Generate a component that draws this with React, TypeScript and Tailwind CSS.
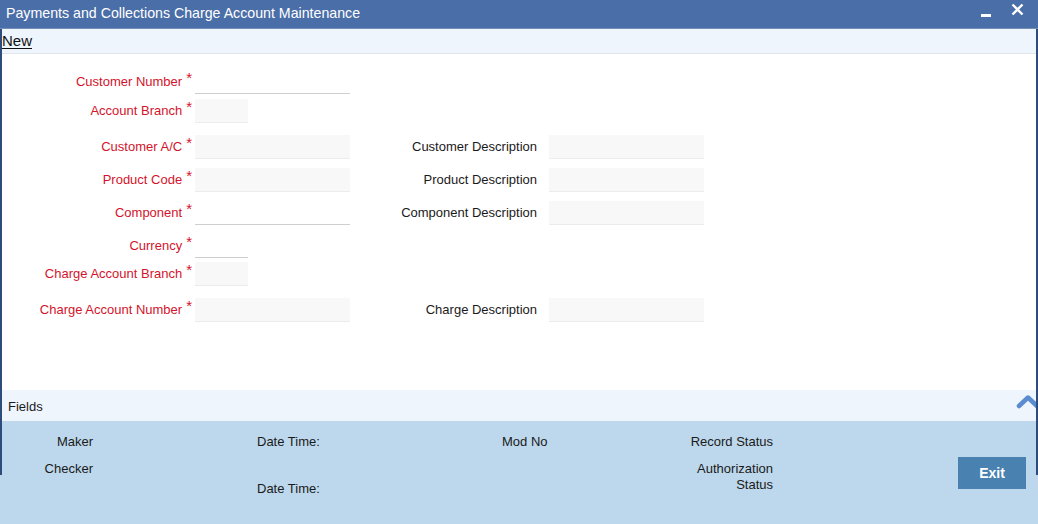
import React from 'react'

const font = { fontFamily: '"Liberation Sans", Arial, sans-serif' }

type Field = {
  label: string
  width: 'wide' | 'short'
  look: 'fill' | 'line'
  top: string
  desc?: string
}

// vertical spacing follows the reference rows exactly
const fields: Field[] = [
  { label: 'Customer Number', width: 'wide', look: 'line', top: 'mt-[16px]' },
  { label: 'Account Branch', width: 'short', look: 'fill', top: 'mt-[5px]' },
  { label: 'Customer A/C', width: 'wide', look: 'fill', top: 'mt-[12px]', desc: 'Customer Description' },
  { label: 'Product Code', width: 'wide', look: 'fill', top: 'mt-[9px]', desc: 'Product Description' },
  { label: 'Component', width: 'wide', look: 'line', top: 'mt-[9px]', desc: 'Component Description' },
  { label: 'Currency', width: 'short', look: 'line', top: 'mt-[9px]' },
  { label: 'Charge Account Branch', width: 'short', look: 'fill', top: 'mt-[4px]' },
  { label: 'Charge Account Number', width: 'wide', look: 'fill', top: 'mt-[12px]', desc: 'Charge Description' },
]

function Input({ width, look }: { width: 'wide' | 'short'; look: 'fill' | 'line' }) {
  return (
    <div
      className={
        (width === 'wide' ? 'w-[155px] ' : 'w-[53px] ') +
        (look === 'fill'
          ? 'h-[24px] bg-[#f8f8f8] border-b border-[#ececec]'
          : 'h-[24px] bg-white border-b border-[#cfcfcf]')
      }
    />
  )
}

function FormRow({ f }: { f: Field }) {
  return (
    <div className={`flex items-center h-[24px] ${f.top}`}>
      <div className="w-[195px] pr-[3px] text-right text-[13px] text-[#d3132b] whitespace-nowrap">
        {f.label}
        <span className="ml-[4px] relative -top-[3px] text-[15px] leading-none">*</span>
      </div>
      <Input width={f.width} look={f.look} />
      {f.desc && (
        <>
          <div className="w-[187px] text-right text-[13px] text-[#1a1a1a] whitespace-nowrap">{f.desc}</div>
          <div className="w-[12px]" />
          <Input width="wide" look="fill" />
        </>
      )}
    </div>
  )
}

export default function App() {
  return (
    <div className="relative w-[1038px] h-[524px] overflow-hidden bg-white" style={font}>
      {/* title bar */}
      <div className="h-[29px] bg-[#4a6ea7] border-b border-[#7590b7] flex items-center justify-between pl-[6px] pr-[14px]">
        <span className="text-white text-[14.2px] -mt-[1px]">Payments and Collections Charge Account Maintenance</span>
        <div className="flex items-center gap-[20px]">
          <svg width="10" height="4" viewBox="0 0 10 4" className="mt-[4px]">
            <rect width="10" height="3" fill="white" />
          </svg>
          <svg width="13" height="13" viewBox="0 0 13 13" className="-mt-[9px]">
            <path d="M1.5 1.5 L11.5 11.5 M11.5 1.5 L1.5 11.5" stroke="white" strokeWidth="2.4" />
          </svg>
        </div>
      </div>

      {/* toolbar */}
      <div className="h-[25px] bg-[#eef5fd] border-b border-[#e2e6ea] flex items-center pl-[2px]">
        <span className="text-[15px] text-[#111] underline underline-offset-2">New</span>
      </div>

      {/* form */}
      <div className="h-[336px] flex flex-col">
        {fields.map((f) => (
          <FormRow key={f.label} f={f} />
        ))}
      </div>

      {/* fields bar */}
      <div className="h-[31px] bg-[#eef5fd] flex items-center justify-between pl-[8px]">
        <span className="text-[13px] text-[#1a1a1a] pt-[3px]">Fields</span>
        <svg width="24" height="16" viewBox="0 0 24 16" className="-mr-[2px] -mt-[9px]">
          <path d="M3 13 L12 4.5 L21 13" stroke="#5b8bd0" strokeWidth="4.5" fill="none" strokeLinejoin="round" strokeLinecap="round" />
        </svg>
      </div>

      {/* audit footer */}
      <div className="h-[103px] bg-[#bdd8ec] flex text-[13px] text-[#1a1a1a]">
        <div className="w-[93px] pt-[11px] text-right flex flex-col">
          <span>Maker</span>
          <span className="mt-[7px]">Checker</span>
        </div>
        <div className="w-[164px]" />
        <div className="w-[160px] pt-[11px] flex flex-col">
          <span>Date Time:</span>
          <span className="mt-[27px]">Date Time:</span>
        </div>
        <div className="w-[85px]" />
        <div className="w-[120px] pt-[11px]">
          <span>Mod No</span>
        </div>
        <div className="w-[151px] pt-[13px] text-right flex flex-col leading-[16px]">
          <span>Record Status</span>
          <span className="mt-[11px]">Authorization</span>
          <span>Status</span>
        </div>
        <div className="w-[253px] pt-[36px] flex justify-end">
          <button className="w-[68px] h-[32px] bg-[#4982b0] text-white font-bold text-[14px]">Exit</button>
        </div>
      </div>

      {/* window frame edges */}
      <div className="absolute left-0 top-[29px] w-[2px] h-[446px] bg-[#2d4c7c]" />
      <div className="absolute right-0 top-[29px] w-[2px] h-[446px] bg-[#2d4c7c]" />
    </div>
  )
}
